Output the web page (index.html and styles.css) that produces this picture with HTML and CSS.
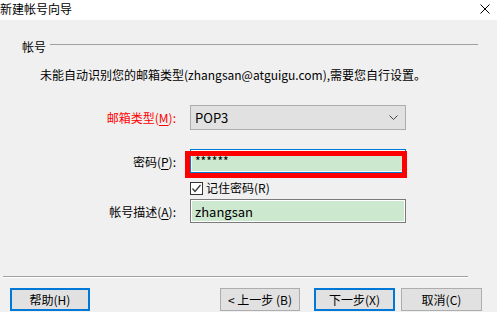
FILE: index.html
```html
<!DOCTYPE html>
<html>
<head>
    <title>新建帐号向导</title>
    <link rel="stylesheet" href="styles.css">
</head>
<body>
    <div class="titlebar">
        <span class="title">新建帐号向导</span>
        <svg class="close" width="10" height="10" viewBox="0 0 10 10">
            <path d="M0.5 0.5 L9.5 9.5 M9.5 0.5 L0.5 9.5" stroke="#000" stroke-width="1" fill="none"/>
        </svg>
    </div>

    <div class="main">
        <div class="group-head">
            <span class="legend">帐号</span>
            <span class="legend-line"></span>
        </div>

        <p class="notice">未能自动识别您的邮箱类型(zhangsan@atguigu.com),需要您自行设置。</p>

        <div class="row row-type">
            <label class="label label-red">邮箱类型(<u>M</u>):</label>
            <div class="select">
                <span>POP3</span>
                <svg width="9" height="6" viewBox="0 0 9 6">
                    <path d="M0.5 0.5 L4.5 4.5 L8.5 0.5" stroke="#444" stroke-width="1" fill="none"/>
                </svg>
            </div>
        </div>

        <div class="row row-pass">
            <label class="label">密码(<u>P</u>):</label>
            <div class="field field-focus">
                <span class="stars">******</span>
                <div class="mark"></div>
            </div>
        </div>

        <div class="row row-check">
            <span class="label"></span>
            <span class="checkbox">
                <svg width="11" height="11" viewBox="0 0 11 11">
                    <path d="M1.5 5.5 L4 8.5 L9.5 2" stroke="#333" stroke-width="1.2" fill="none"/>
                </svg>
            </span>
            <span class="check-text">记住密码(R)</span>
        </div>

        <div class="row row-desc">
            <label class="label">帐号描述(<u>A</u>):</label>
            <div class="field">zhangsan</div>
        </div>
    </div>

    <div class="footer">
        <div class="separator"></div>
        <div class="buttons">
            <button class="btn btn-default btn-help">帮助(H)</button>
            <button class="btn btn-prev">&lt; 上一步 (B)</button>
            <button class="btn btn-next btn-default">下一步(X)</button>
            <button class="btn btn-cancel">取消(C)</button>
        </div>
    </div>
</body>
</html>
```

FILE: styles.css
```css
html, body {
    margin: 0;
    height: 312px;
    overflow: hidden;
}

body {
    display: flex;
    flex-direction: column;
    background-color: #f0f0f0;
    font-family: "Microsoft YaHei", "Noto Sans CJK SC", sans-serif;
    font-size: 12px;
    color: #000;
}

.titlebar {
    height: 20px;
    flex: none;
    background-color: #fff;
    display: flex;
    align-items: center;
    justify-content: space-between;
    padding-right: 7px;
}

.title {
    line-height: 16px;
    margin-top: -3px;
}

.close {
    margin-top: -3px;
}

.main {
    flex: none;
}

.group-head {
    display: flex;
    align-items: center;
    height: 14px;
    margin-top: 20px;
    padding-left: 22px;
    padding-right: 19px;
}

.legend {
    line-height: 14px;
}

.legend-line {
    flex: 1;
    height: 1px;
    background-color: #a0a0a0;
    margin-left: 4px;
    margin-bottom: 6px;
}

.notice {
    margin: 13px 0 0 40px;
    line-height: 16px;
}

.row {
    display: flex;
    align-items: center;
}

.label {
    padding-right: 14px;
    box-sizing: border-box;
    width: 190px;
    text-align: right;
    flex: none;
}

.label u {
    text-underline-offset: 2px;
}

.label-red {
    color: #ff0000;
}

.row-type {
    margin-top: 22px;
    height: 25px;
}

.select {
    width: 216px;
    height: 25px;
    box-sizing: border-box;
    background-color: #e1e1e1;
    border: 1px solid #adadad;
    display: flex;
    align-items: center;
    justify-content: space-between;
    padding: 0 7px 0 4px;
    font-size: 13px;
}

.field {
    position: relative;
    width: 216px;
    height: 24px;
    box-sizing: border-box;
    background-color: #cce8cf;
    border: 1px solid #7a7a7a;
    box-shadow: inset 0 0 0 1px #fff;
    padding-left: 4px;
    display: flex;
    align-items: center;
    font-size: 13px;
}

.row-pass {
    margin-top: 19px;
    height: 24px;
}

.field-focus {
    border-color: #0078d7;
}

.stars {
    font-size: 12px;
    line-height: 14px;
    align-self: flex-start;
    margin-top: 4px;
    position: relative;
    z-index: 1;
}

.mark {
    position: absolute;
    left: -6px;
    top: 1px;
    width: 222px;
    height: 27px;
    box-sizing: border-box;
    border: 5px solid #ff0000;
}

.row-check {
    margin-top: 6px;
    height: 16px;
}

.checkbox {
    width: 13px;
    height: 13px;
    box-sizing: border-box;
    border: 1px solid #333;
    background-color: #fff;
    display: flex;
    align-items: center;
    justify-content: center;
    margin-top: 2px;
}

.check-text {
    margin-left: 3px;
}

.row-desc {
    margin-top: 4px;
    height: 24px;
}

.footer {
    margin-top: auto;
    padding-bottom: 1px;
}

.separator {
    margin: 0 29px 0 3px;
    height: 1px;
    background-color: #a0a0a0;
    border-bottom: 1px solid #fff;
}

.buttons {
    display: flex;
    margin-top: 10px;
    padding-left: 10px;
}

.btn {
    height: 23px;
    width: 80px;
    box-sizing: border-box;
    background-color: #e1e1e1;
    border: 1px solid #adadad;
    font-family: inherit;
    font-size: 12px;
    color: #000;
    padding: 0;
}

.btn-default {
    border: 2px solid #0078d7;
}

.btn-prev {
    margin-left: 130px;
}

.btn-next {
    width: 81px;
    margin-left: 14px;
}

.btn-cancel {
    width: 81px;
    margin-left: 6px;
}
```
